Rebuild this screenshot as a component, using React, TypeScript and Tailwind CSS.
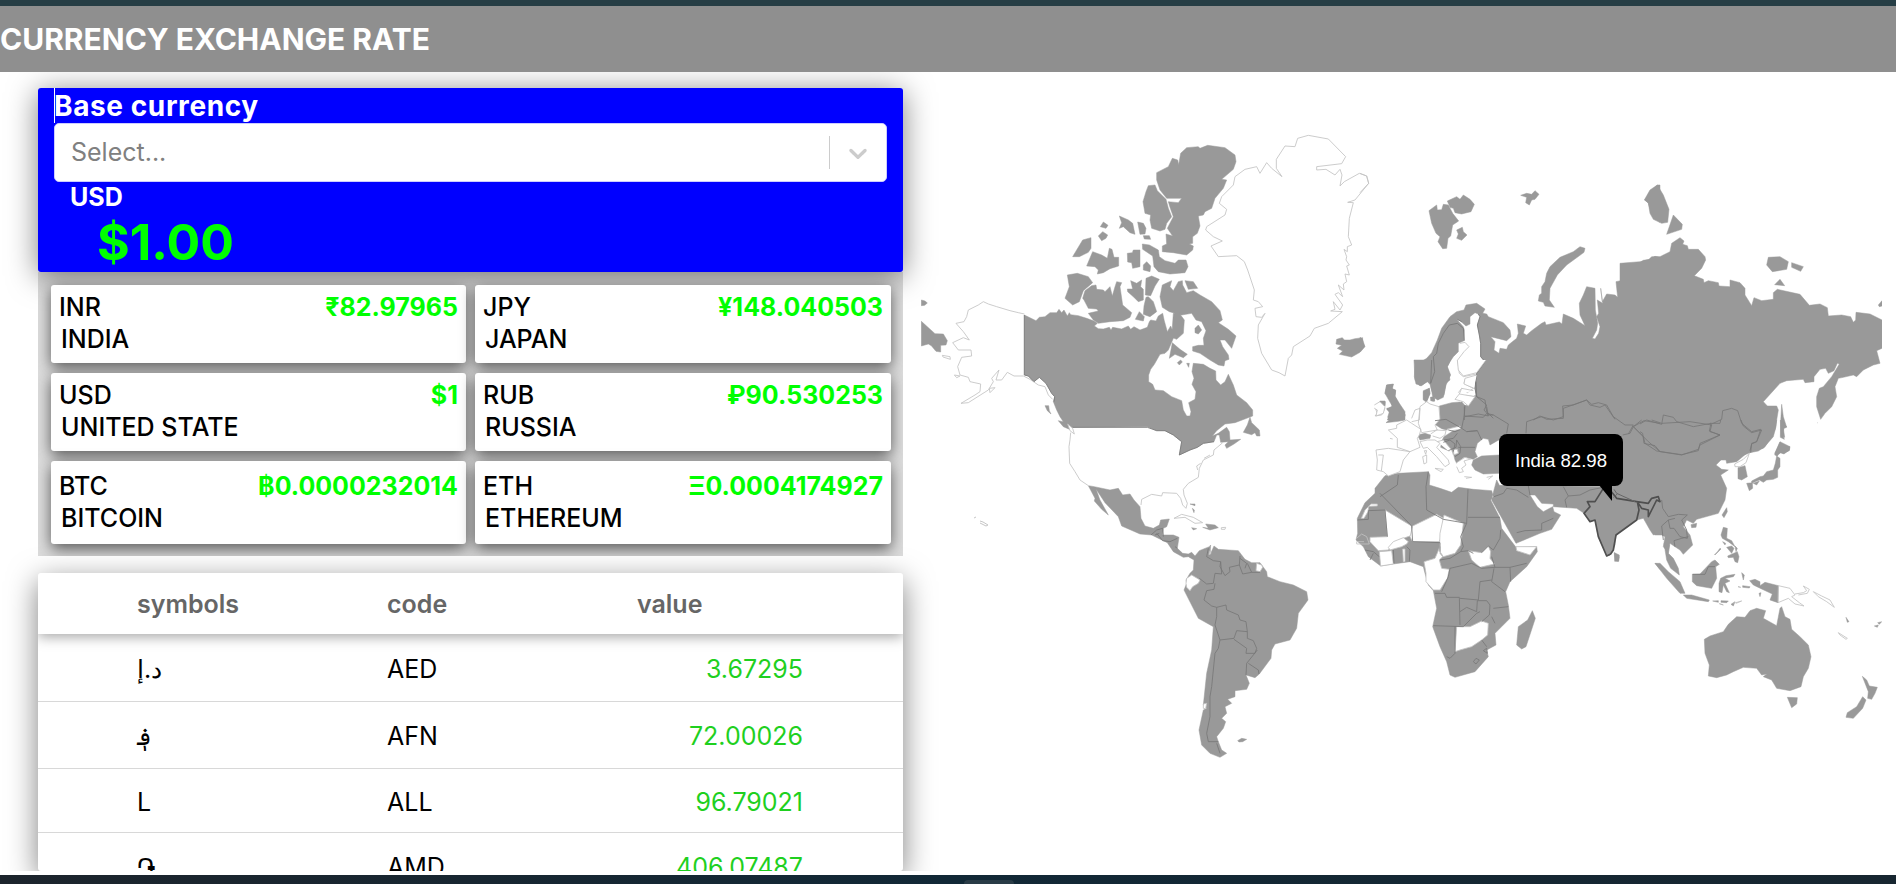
import React from "react";

const rates = [
  { code: "INR", name: "INDIA", value: "₹82.97965" },
  { code: "JPY", name: "JAPAN", value: "¥148.040503" },
  { code: "USD", name: "UNITED STATE", value: "$1" },
  { code: "RUB", name: "RUSSIA", value: "₽90.530253" },
  { code: "BTC", name: "BITCOIN", value: "฿0.0000232014" },
  { code: "ETH", name: "ETHEREUM", value: "Ξ0.0004174927" },
];

const rows = [
  { symbol: "د.إ", code: "AED", value: "3.67295", height: "h-[67px]" },
  { symbol: "؋", code: "AFN", value: "72.00026", height: "h-[67px]" },
  { symbol: "L", code: "ALL", value: "96.79021", height: "h-[64px]" },
  { symbol: "֏", code: "AMD", value: "406.07487", height: "h-[67px]" },
];

type Sheet = { at: string; land: string[]; open?: string[]; borders?: string[] };

const sheets: Sheet[] = [
  {
    at: "translate(910 120) scale(.33333)",
    land: [
      "M343 585 378 602 388 592 405 590 420 578 440 578 447 568 455 578 462 570 472 588 478 578 482 584 505 587 530 595 552 603 562 610 553 618 565 626 580 627 598 622 603 630 608 622 635 627 655 618 662 628 672 620 690 630 712 622 718 605 722 600 738 603 745 588 758 580 763 603 772 635 782 618 788 632 790 655 775 690 765 700 750 703 733 733 722 748 716 765 716 785 728 793 735 810 760 812 785 830 815 842 820 870 830 888 840 888 843 875 836 848 855 838 858 815 846 793 852 775 846 755 850 730 880 733 900 745 917 753 918 780 932 795 945 785 955 763 970 795 980 825 1010 848 1028 870 1028 888 1010 895 975 908 945 912 920 932 907 948 925 940 950 922 958 935 960 960 992 958 972 972 950 985 945 975 955 965 932 967 928 945 920 945 912 965 880 970 862 982 840 990 808 1005 815 965 790 945 765 932 740 932 712 920 488 922 483 930 460 920 445 902 460 905 450 890 440 870 430 845 434 830 425 820 408 790 388 772 372 785 355 768 343 765Z",
      "M1020 892 1025 908 1048 930 1050 948 1040 948 1035 938 1025 944 1000 937 1012 915Z",
      "M405 857 416 857 418 872 423 882 412 872Z",
      "M893 76 945 83 975 105 978 125 970 148 935 178 950 180 940 205 915 235 905 265 885 275 880 285 865 288 870 318 862 340 848 350 848 370 838 372 850 378 848 390 830 405 790 398 757 395 757 378 770 372 768 342 788 348 772 325 790 290 780 262 775 245 805 248 815 235 770 235 750 210 740 180 740 158 775 140 787 115 803 120 806 134 812 100 830 83 865 80 870 85Z",
      "M715 197 735 195 742 212 768 238 775 265 785 290 770 310 765 328 750 333 725 325 720 300 722 285 705 280 699 245 708 215Z",
      "M628 288 655 300 668 310 675 343 660 338 640 320 628 325 635 308Z",
      "M683 306 700 310 708 325 705 342 690 343Z",
      "M700 347 718 347 722 358 703 357Z",
      "M571 320 580 306 594 316 588 325Z",
      "M565 348 578 335 593 345 588 355 575 362Z",
      "M518 360 543 353 543 385 535 397 508 410 488 410Z",
      "M548 395 575 405 592 415 598 385 606 388 612 412 626 412 626 438 600 446 580 458 562 462 565 450 555 440 530 438Z",
      "M652 400 667 398 670 390 690 390 690 440 668 445 665 428 653 426Z",
      "M697 372 718 375 745 390 748 410 765 422 795 430 805 420 828 420 834 440 825 458 780 462 745 455 732 440 728 408 698 388Z",
      "M700 435 710 425 722 438 720 455 700 450Z",
      "M472 465 502 460 535 470 548 488 520 512 508 545 488 555 465 535 478 500Z",
      "M545 497 558 495 560 508 580 510 585 515 600 500 607 528 615 500 620 485 635 488 630 500 638 555 665 578 660 592 640 602 600 605 565 610 550 600 535 580 565 573 560 567 535 565 522 540 518 535 525 512Z",
      "M662 482 680 490 695 480 692 500 700 508 700 540 685 545 670 530 653 515 652 507 668 507Z",
      "M708 475 725 468 748 478 735 498 722 527 706 525Z",
      "M708 532 715 530 730 545 740 575 720 590 700 583 702 558Z",
      "M688 575 703 590 700 603 676 598Z",
      "M757 495 785 482 780 500 790 512 805 485 817 482 818 495 830 518 850 512 870 525 905 545 930 572 937 600 925 608 955 628 978 648 965 685 945 660 930 660 938 680 955 705 957 718 945 722 942 738 925 735 900 720 870 700 848 693 848 680 865 676 882 676 880 655 888 632 875 605 858 600 845 580 815 585 778 575 757 562 750 530Z",
      "M825 482 850 485 863 505 835 508Z",
      "M790 580 808 580 823 600 820 640 800 658 785 652Z",
      "M855 625 865 615 875 630 865 642 855 638Z",
      "M787 668 810 688 832 703 820 713 795 703 778 715Z",
      "M802 728 812 720 817 726 808 735ZM830 730 838 730 836 742Z",
      "M34 540 45 543 52 549 44 556 34 557ZM34 604 75 641 100 642 112 662 108 675 92 676 92 696 78 694 64 677 55 672 34 678Z",
      "M1280 658 1297 653 1303 660 1320 660 1335 656 1358 653 1357 666 1365 680 1350 697 1325 711 1288 703 1298 693 1282 685 1295 676 1278 672Z",
    ],
    open: [
      "M1116 170 1099 145 1099 118 1125 78 1155 80 1163 55 1195 46 1255 57 1307 110 1295 131 1220 140 1220 150 1248 148 1275 165 1290 148 1296 165 1290 198 1303 185 1348 160 1370 168 1376 190 1335 240 1313 247 1330 248 1318 295 1315 350 1325 375 1312 380 1312 395 1302 388 1310 410 1308 420 1318 435 1310 438 1318 465 1305 462 1310 485 1300 492 1302 510 1285 495 1298 530 1285 518 1275 523 1298 555 1290 570 1270 545 1275 568 1262 573 1297 575 1255 610 1213 625 1200 648 1150 680 1145 705 1135 715 1125 768 1107 758 1085 750 1055 700 1043 655 1045 615 1065 580 1055 592 1038 590 1035 565 1058 560 1045 545 1030 540 1033 510 1013 450 1003 425 980 407 925 410 903 378 937 363 910 350 887 330 890 320 945 285 950 268 928 250 935 230 970 195 975 170 1005 148 1040 140 1050 160 1070 128 1085 145Z",
      "M343 582 325 578 300 572 260 560 235 552 220 545 205 555 175 570 170 590 162 605 138 610 160 635 178 660 160 653 128 668 145 690 183 690 185 708 155 712 143 740 150 765 175 772 180 785 212 792 210 815 195 825 153 850 175 848 235 810 250 785 245 775 267 750 258 780 275 780 292 757 312 768 340 768 360 778 385 795 405 800 415 825 428 838",
      "M97 706 120 710 121 718 99 711ZM133 765 150 768 140 773ZM238 805 255 803 240 818ZM473 912 488 925 493 942 480 932Z",
    ],
  },
  {
    at: "translate(1360 170) scale(.33333)",
    land: [
      "M0 502 8 508 14 528 0 545Z",
      "M375 417 350 400 318 405 312 420 290 425 270 440 245 475 232 510 215 548 200 565 165 587 163 620 168 642 185 647 205 632 210 640 213 655 222 680 235 688 252 675 258 640 270 630 265 605 262 590 270 575 280 560 295 545 295 520 312 512 313 480 310 470 290 448 300 452 318 468 330 462 330 440 345 428 355 432 360 440 352 465 358 495 362 520 362 560 375 575 350 610 345 655 350 680 350 750 900 750 900 262 885 259 868 268 850 271 815 295 815 325 768 335 773 382 765 375 740 372 727 395 722 355 728 400 712 390 716 430 710 440 720 470 716 490 705 507 697 505 710 480 713 460 706 420 705 355 680 350 670 375 658 400 660 435 675 467 640 445 610 432 606 462 598 456 558 465 555 455 545 460 515 482 500 495 490 490 497 468 472 462 475 490 470 505 445 525 440 538 420 535 417 550 402 540 405 515 392 500 440 512 453 500 450 480 430 458 385 440 380 432 368 430Z",
      "M207 122 230 105 232 120 245 119 250 103 265 105 278 130 296 153 278 165 272 198 264 205 260 235 248 236 234 215 240 200 228 190 215 160Z",
      "M262 93 290 80 300 88 310 75 330 88 343 103 333 125 305 132 285 128 280 115 270 112Z",
      "M290 180 307 172 310 185 321 195 305 211 290 205 295 192Z",
      "M482 76 500 70 515 73 525 62 537 73 525 88 515 90 508 105 497 98 500 82Z",
      "M570 290 600 262 640 245 660 230 675 235 672 247 620 285 592 315 570 355 568 390 583 412 555 408 550 397 535 393 538 375 545 370 545 350 555 335 560 310Z",
      "M900 45 892 45 870 65 855 90 865 100 875 135 900 157Z",
      "M190 665 208 655 210 670 205 680 200 697 190 690ZM212 682 222 680 224 693 212 692Z",
      "M80 645 100 643 95 655 107 660 105 680 115 700 130 725 136 735 130 750 82 750 90 730 80 715 97 712 90 685 75 670Z",
      "M238 708 275 698 300 696 305 706 325 708 350 683 375 690 385 718 380 725 405 750 240 750Z",
      "M60 693 75 693 75 708 62 705Z",
    ],
    open: [
      "M350 612 310 620 298 610 293 570 312 545 327 530 315 517 300 520M0 10 20 18 26 40 0 68M345 625 315 628 312 640 330 650 345 655M295 668 305 655 322 668 340 655M293 680 318 676 345 680M62 705 45 712 52 730 45 738 65 735 75 715",
    ],
    borders: [
      "M313 512 310 475 292 460 268 465 250 490 235 520 230 550 220 560 224 605 212 640M292 448 305 455M355 432 360 440 352 465 358 495 362 520 362 560 375 575 350 610 345 655 350 680 375 690 380 725 400 745M520 750 540 738 560 748 610 745 608 708 640 705 680 690 690 705 720 712 735 705 765 748M313 738 370 742 380 730 400 735M313 710 313 750",
    ],
  },
  {
    at: "translate(1640 160) scale(.33333)",
    land: [
      "M-60 310 0 305 25 300 35 290 60 290 90 275 95 250 120 233 132 243 128 253 142 257 145 268 175 268 195 290 197 300 185 325 163 347 190 358 192 368 205 362 235 368 237 378 270 380 270 360 300 368 315 385 315 405 335 437 342 413 365 422 400 418 400 398 412 388 480 403 508 436 540 432 562 443 565 468 605 465 632 470 640 487 647 480 648 457 690 462 726 480 726 565 710 572 720 610 700 615 670 630 650 650 640 645 610 652 595 655 585 680 590 710 575 740 555 760 542 778 530 740 530 710 538 685 550 680 575 650 598 612 592 610 582 632 565 640 557 625 540 628 522 650 522 665 495 668 490 658 440 662 420 670 370 725 382 738 410 738 415 750 405 810 375 860 355 873 330 878 300 890 250 900 -60 900Z",
      "M52 75 70 105 87 148 83 187 65 190 40 178 30 160 25 128 13 120 30 90Z",
      "M100 165 127 193 125 208 80 223Z",
      "M385 292 420 290 445 305 440 328 397 335 380 315ZM455 308 490 320 482 334 455 322ZM404 374 420 358 434 377Z",
      "M726 422 715 435 718 440 726 438Z",
      "M425 733 430 770 440 802 432 805 428 822 433 838 421 832 422 785Z",
      "M420 846 432 858 449 860 448 870 432 882 422 878 410 888 404 880Z",
    ],
    borders: [
      "M0 792 20 780 65 793 70 765 100 772 110 785 160 800 213 790 208 813 240 825 220 835 180 855 175 868 125 885 60 875 45 857 12 850 8 820 0 815M213 793 245 778 248 752 275 745 293 752 305 790 335 815 362 808 350 845 335 850 332 878",
    ],
  },
  {
    at: "translate(1340 360) scale(.33333)",
    land: [
      "M438 0 410 45 405 65 408 105 395 112 378 140 365 125 345 135 300 140 300 178 285 182 283 192 305 206 320 210 360 198 362 208 340 212 312 230 305 243 302 262 325 272 340 280 345 300 350 310 372 292 400 298 412 290 405 275 412 250 430 235 445 238 450 255 462 248 476 240 490 260 850 300 850 380 478 376 470 360 458 405 455 420 528 550 600 520 635 508 662 465 642 455 638 440 610 455 592 440 570 405 585 405 605 430 640 432 640 440 710 445 732 460 750 485 765 480 775 530 800 588 812 582 820 570 828 525 890 480 910 475 930 510 940 525 960 520 960 0Z",
      "M400 300 425 288 478 285 478 340 430 342 405 330 395 315Z",
      "M222 0 225 60 240 78 262 65 272 75 278 110 293 120 310 112 318 75 332 45 322 20 332 0Z",
      "M140 75 160 72 157 88 167 92 165 108 178 130 195 155 195 180 175 184 138 188 150 178 143 172 148 155 140 148 157 138 145 118 135 100ZM120 125 136 125 135 137 124 135ZM250 92 268 85 270 102 262 120 250 118ZM272 112 284 112 283 124 275 123Z",
      "M232 225 255 220 272 225 270 235 240 240Z",
      "M135 347 175 340 265 335 270 345 268 375 300 385 335 397 355 382 400 388 455 392 460 410 452 420 480 475 485 505 528 562 590 560 592 575 560 620 510 665 497 695 505 735 510 775 465 820 468 855 440 870 445 890 405 935 345 952 330 945 320 905 300 860 278 800 290 745 280 692 265 675 255 640 250 620 210 605 160 612 122 618 85 590 70 560 48 540 53 520 52 475 75 428 105 400 105 385Z",
      "M577 752 586 775 558 860 545 867 530 855 535 800 563 780Z",
      "M823 578 838 590 836 604 824 604Z",
      "M945 610 960 615 960 628Z",
    ],
    open: [
      "M93 432 112 432 112 438 86 439 84 455 72 475 64 475 75 450 85 440Z",
      "M135 450 215 498 218 525 190 535 170 545 150 562 145 570 115 572 90 545 90 532 142 530Z",
      "M218 498 290 463 310 475 308 520 298 545 218 545 210 530Z",
      "M312 465 370 490 362 555 345 580 310 590 298 572 300 520Z",
      "M190 533 205 545 200 552 185 560 150 570 145 562 160 545Z",
      "M118 575 155 572 160 612 122 618ZM188 567 195 567 195 605 190 605Z",
      "M300 560 300 580 308 590 298 600 305 625 328 628 322 655 300 690 280 690 258 665 258 640 252 605 285 595Z",
      "M385 572 425 578 445 558 452 575 450 595 463 612 420 622 395 600Z",
      "M350 800 390 800 425 783 445 790 443 825 425 840 395 860 360 870 345 875Z",
      "M528 560 590 560 570 585 530 572Z",
      "M50 535 65 522 80 530 88 552 50 552 50 545 72 545",
      "M103 135 120 125 135 140 130 160 108 168 112 150 103 145M108 270 145 265 210 275 190 300 180 335 145 348 130 335 110 330 112 300ZM115 285 130 285 124 333M145 210 170 205 170 195 200 180 215 190 243 208 238 225 232 235 240 262 210 275 172 262 172 235ZM215 175 225 150 240 145 238 180 215 185M240 140 260 125 270 132 297 140 300 178 285 195 292 210 245 218 235 190ZM240 245 262 240 285 240 300 250 290 262 325 300 328 312 315 320 290 290 262 262 250 265ZM272 222 290 210 318 212 315 225 300 235 278 228M320 208 360 198 362 208 335 212M285 325 310 328 303 335ZM248 290 260 285 260 308 252 312ZM253 272 260 272 257 283ZM350 308 375 292 392 297 372 303 378 315 365 325 370 335 358 338 350 320M373 350 395 352 378 355M440 352 458 348 445 358M410 45 375 55 372 72 402 85M358 102 365 85 400 92M358 102 405 110 385 138 370 125 345 118ZM438 0 410 38 370 48 355 30 352 0M150 235 158 237M292 245 310 240 335 270 340 285M340 268 352 268 355 280 342 284Z",
    ],
    borders: [
      "M275 0 272 70M408 65 410 110 440 135 432 150 445 165M440 140 445 168 415 162 375 170M375 135 373 165 365 205 380 215 412 212M440 165 460 165 505 192 500 220M285 182 318 178 365 205M325 210 345 215 362 208M312 240 340 235 352 220M325 272 348 262 350 240M355 262 405 262M380 215 412 212 425 240M350 240 362 260 360 280 345 290M310 247 330 240 345 252 340 275M558 220 560 185 605 170 640 180 670 170 670 145 740 120 755 133 775 128 800 135 820 170 855 195 880 195 865 222M880 200 912 182 960 190M880 200 925 245 960 275",
      "M175 345 172 375 120 410M120 400 215 498M265 335 258 380 260 450 310 478 380 490 384 388M384 472 480 472M380 490 362 530 370 560 362 575 330 595 300 600M362 575 385 572 400 580M425 578 445 558 460 570 480 535 482 510M455 590 465 622 425 625M465 622 510 622 560 610M510 622 512 665M462 625 455 665 495 695M420 665 455 660M420 665 415 720 360 715M305 695 325 650 330 625 395 610 425 625M285 700 315 700 320 712 358 712 360 795M280 797 370 800 410 760 420 755M360 755 380 742 410 755 412 722 440 722 450 735 448 765 425 785M460 745 505 740M455 770 465 790M345 800 345 880 330 895 320 890M425 840 440 860M400 905 408 895 418 900 408 912ZM430 872 440 865 442 880ZM52 480 85 478 85 452 135 450 142 530M215 498 218 545 300 548 300 575M160 570 162 610M200 560 210 570 208 605M75 570 100 575 118 590M100 580 90 600M462 410 490 400 500 385 530 390 565 412M530 518 555 512 605 510 605 490 640 475M565 378 570 405M670 380 685 408 675 420 680 442M685 408 720 405 750 390 800 380",
    ],
  },
  {
    at: "translate(1600 420) scale(.33333)",
    land: [
      "M0 0 530 0 528 20 520 50 490 85 450 92 440 100 410 125 380 130 378 120 365 118 348 135 365 148 385 150 362 165 380 205 375 240 355 280 290 298 280 310 260 300 250 320 270 345 278 375 250 403 240 390 225 380 210 370 205 400 190 380 195 350 185 345 165 345 155 320 130 290 105 295 45 350 45 375 27 408 0 355Z",
      "M192 370 208 375 205 400 220 415 235 445 238 465 212 445 200 420Z",
      "M414 143 435 137 442 170 425 180 414 176Z",
      "M541 0 560 20 550 25 554 52 543 48ZM540 65 570 80 568 92 550 100 535 97 533 107 524 105Z",
      "M530 108 540 115 540 140 533 150 533 172 520 178 500 180 490 187 478 180 455 190 455 183 480 170 490 168 500 155 520 150 526 130ZM440 190 457 188 458 205 448 212ZM460 190 478 183 470 195Z",
      "M380 263 382 275 372 293 366 285ZM273 314 290 310 288 322 275 323Z",
      "M370 322 382 325 380 355 395 362 405 380 385 365 367 355 363 345ZM368 365 377 370 375 375ZM380 382 395 378 402 385 395 400ZM405 378 412 385 408 395ZM383 408 412 395 417 410 413 428 405 425 400 412 385 413ZM360 385 363 387 345 405Z",
      "M165 430 180 430 205 455 240 485 255 520 240 520 200 475Z",
      "M250 525 275 525 328 540 325 545 260 535ZM338 543 355 542 355 547ZM363 542 385 543 380 548 363 547ZM393 553 405 545 400 558ZM358 551 370 555Z",
      "M277 463 300 462 335 425 345 420 358 433 347 440 350 475 335 505 290 497 277 485Z",
      "M362 475 378 467 405 463 400 470 375 475 390 483 375 490 388 518 380 515 370 495 366 518 357 515 357 490Z",
      "M425 458 433 465 430 480ZM414 500 422 502ZM428 497 450 500 448 504 428 502ZM477 520 483 518 480 530Z",
      "M449 482 465 478 480 485 480 497 495 487 535 497 534 548 510 540 517 522 485 507 460 495Z",
      "M313 658 330 648 370 635 385 613 410 590 435 592 450 572 470 565 497 572 490 595 530 617 540 565 545 560 555 590 570 598 575 628 600 650 625 675 633 710 625 745 610 770 603 800 570 812 530 805 515 780 490 770 500 762 485 765 470 745 430 742 400 755 380 765 350 773 325 768 328 735 315 700Z",
      "M562 832 592 833 590 852 575 863Z",
      "M787 769 800 780 808 798 832 802 825 820 815 838 803 835 805 815ZM788 830 798 840 788 865 760 895 738 892 742 878 770 860Z",
      "M738 592 747 605 742 607ZM823 618 835 615 832 622ZM833 608 845 605 838 613Z",
      "M43 398 58 405 55 424 46 422Z",
    ],
    open: [
      "M535 497 570 505 585 525 575 530 598 548 612 558 585 552 565 535 534 548ZM585 522 610 518 620 512 610 498 628 508 622 520 595 525M640 515 665 528 690 540 703 562 680 545 655 530ZM715 638 742 655 738 658 720 645ZM400 550 425 543 408 550M404 132 430 118 448 100 438 128 420 140 405 140ZM342 405 355 392M652 8 654 9",
    ],
    borders: [
      "M68 45 90 40 100 20 125 0M100 20 130 50 135 70 170 93 245 104 295 92 300 70 360 45 330 35 335 15 270 5 185 10 155 0M330 10 360 10 362 0M423 0 430 18 455 38 485 30 470 65 455 72 450 92M185 240 188 265 205 290 235 283 262 285 245 300 260 330 262 355 240 350 222 325 210 325 205 300 185 318 190 360M205 300 225 295M225 380 222 362 245 355 265 350M278 463 315 463 325 440 345 440",
    ],
  },
  {
    at: "translate(1060 420) scale(.33333)",
    land: [
      "M85 197 103 200 150 210 175 205 188 225 210 222 222 240 240 260 243 295 255 318 280 325 298 315 302 300 328 297 320 320 310 325 308 345 340 345 357 352 352 385 368 400 385 402 395 397 405 408 418 392 448 380 452 375 450 405 462 378 475 388 535 392 555 418 575 428 600 428 620 455 622 470 660 485 700 495 740 515 744 540 715 580 710 625 690 660 645 672 635 690 633 715 598 762 585 773 558 765 568 790 560 808 525 812 525 830 503 838 515 850 495 860 500 880 485 895 497 905 490 925 470 950 475 965 485 990 500 1000 480 1012 450 1000 425 975 417 930 430 870 440 865 430 855 440 760 455 690 460 620 415 595 372 510 380 490 378 480 390 460 400 450 402 420 385 410 370 412 340 395 322 368 275 345 240 342 185 318 175 290 135 248 108 207 120 240 145 285 125 268 103 243 105 235Z",
      "M390 252 405 252 405 257ZM397 265 403 270 402 278ZM395 323 410 326 400 330ZM428 322 445 325 437 312 465 315 475 323 450 330ZM533 962 545 955 560 958 548 965 537 966Z",
    ],
    open: [
      "M32 38 30 60 27 80 29 130 45 155 60 180 85 197M243 255 245 238 275 223 305 228 308 218 350 220 362 235 368 255 378 265 382 250 372 225 370 208 385 190 415 172 418 145 430 120 460 105 462 90 480 75 488 68M413 150 410 138 422 130M432 115 450 105M342 295 365 283 400 292 428 308 405 310 375 292ZM484 323 497 322 495 328 484 328Z",
      "M378 490 380 475 395 465 420 480 415 490 398 500 390 512 380 502Z",
      "M590 430 605 435 608 442 600 455 588 452ZM450 392 453 400 447 404ZM430 852 440 850 437 866 430 865Z",
    ],
    borders: [
      "M445 385 440 410 460 422 482 425 485 462 465 460 460 490 440 492 418 475M482 425 480 440 495 467 510 455 508 442 538 435 540 408M538 435 548 462 575 457 562 430M575 457 600 457M465 490 462 508 440 512 432 540 455 558 470 562 470 590 465 615 480 660 522 655 530 632 562 635 558 605 540 600 535 585 500 570 498 555 470 562M480 660 475 685 465 700 455 800 450 830 450 890 440 940 445 965 475 965M522 658 560 685 558 700 585 700 590 685 580 662 562 655 562 635M592 690 560 730 558 765M565 730 595 750 597 762M273 345 290 330 308 325 310 350M290 340 308 362 330 365 352 355M345 380 352 385M285 345 298 340M540 415 560 430 555 445M470 970 480 1000",
    ],
  },
];

const india =
  "M790 385 765 425 742 425 750 440 732 460 750 485 765 480 775 530 800 588 812 582 820 570 828 525 890 480 897 450 892 425 905 445 925 450 925 470 935 450 950 420 960 425 955 410 935 415 925 430 890 425 830 415 810 390";

function WorldMap() {
  return (
    <svg viewBox="921 72 961 799" className="block h-[799px] w-[961px]" aria-label="World map">
      {sheets.map((sheet) => (
        <g key={sheet.at} transform={sheet.at} strokeLinejoin="round">
          <path d={sheet.land.join("")} fill="#999" stroke="#999" strokeWidth="1.5" />
        </g>
      ))}
      {sheets.map((sheet) => (
        <g key={sheet.at} transform={sheet.at} strokeLinejoin="round">
          {sheet.open?.map((d) => (
            <path key={d} d={d} fill={d.endsWith("Z") ? "#fff" : "none"} stroke="#c2c2c2" strokeWidth="2.5" />
          ))}
          {sheet.borders?.map((d) => (
            <path key={d} d={d} fill="none" stroke="#777" strokeWidth="2.5" />
          ))}
        </g>
      ))}
      <g transform="translate(910 120) scale(.33333)" fill="none" stroke="#777" strokeWidth="2.5">
        <path d="M343 585V765L355 768 372 785 388 772 408 790 425 820 434 830 432 845M488 922H712L740 932 765 932 790 945 815 965 808 1005 840 990 862 982 880 970 912 965" />
      </g>
      <g transform="translate(1340 360) scale(.33333)">
        <path d={india} fill="none" stroke="#4f4f4f" strokeWidth="5" strokeLinejoin="round" />
        <path d="M822 388 830 400 885 425M832 402 820 412" fill="none" stroke="#666" strokeWidth="3" />
      </g>
      <path d="M974 518 976 517M980 521 983 522 988 525 986 526 980 523" fill="none" stroke="#c6c6c6" />
    </svg>
  );
}

export default function App() {
  return (
    <div className="flex h-[884px] w-[1896px] flex-col overflow-hidden bg-white font-['Inter','Noto_Sans',sans-serif] text-black">
      <div className="h-[6px] shrink-0 bg-[#263e45]" />
      <header className="flex h-[66px] shrink-0 items-center bg-[#8f8f8f]">
        <h1 className="text-[30px] leading-none font-bold text-white">CURRENCY EXCHANGE RATE</h1>
      </header>

      <main className="flex h-[799px] shrink-0 overflow-hidden">
        <section className="flex w-[921px] shrink-0 flex-col pt-4 pl-[38px]">
          <div className="flex h-[184px] w-[865px] shrink-0 flex-col rounded-[3px] bg-[#0000ff] px-4 shadow-[0_4px_30px_rgba(0,0,0,0.5)]">
            <h2 className="h-[35px] border-l border-white text-[28px] leading-[36px] font-bold tracking-[0.6px] text-white">
              <span className="-ml-px">Base currency</span>
            </h2>
            <div className="flex h-[59px] shrink-0 items-center rounded-[5px] border border-[#ccccff] bg-white pl-4 text-[25px] text-[#808080]">
              <span className="flex-1">Select...</span>
              <span className="h-[33px] w-px bg-[#ccc]" />
              <span className="flex w-[56px] justify-center">
                <svg viewBox="0 0 20 20" className="h-[30px] w-[30px]" fill="#ccc">
                  <path d="M4.516 7.548c0.436-0.446 1.043-0.481 1.576 0l3.908 3.747 3.908-3.747c0.533-0.481 1.141-0.446 1.574 0 0.436 0.445 0.408 1.197 0 1.615-0.406 0.418-4.695 4.502-4.695 4.502-0.217 0.223-0.502 0.335-0.787 0.335s-0.57-0.112-0.789-0.335c0 0-4.287-4.084-4.695-4.502s-0.436-1.17 0-1.615z" />
                </svg>
              </span>
            </div>
            <div className="pl-4 text-[25px] leading-[30px] font-bold text-white">USD</div>
            <div className="pl-[43px] text-[50px] leading-[60px] font-bold text-[#00ff00]">$1.00</div>
          </div>

          <div className="grid h-[284px] w-[865px] shrink-0 grid-cols-[415px_416px] grid-rows-[78px_78px_83px] gap-x-[9px] gap-y-[10px] overflow-hidden bg-[#00000022] px-[13px] pt-[13px]">
            {rates.map((rate) => (
              <article
                key={rate.code}
                className="flex justify-between rounded-[3px] bg-white px-2 pt-[6px] text-[25px] leading-[32px] font-medium shadow-[0_5px_15px_rgba(0,0,0,0.6)] nth-[n+5]:pt-[9px]"
              >
                <div>
                  <div>{rate.code}</div>
                  <div className="pl-[2px]">{rate.name}</div>
                </div>
                <div className="font-bold text-[#00ff00]">{rate.value}</div>
              </article>
            ))}
          </div>

          <div className="mt-[17px] flex h-[298px] w-[865px] shrink-0 flex-col overflow-hidden rounded-[3px] bg-white shadow-[0_8px_30px_rgba(0,0,0,0.5)]">
            <div className="z-10 grid h-[61px] shrink-0 grid-cols-[250px_250px_1fr] items-center bg-white pt-[2px] pl-[99px] text-[25px] font-semibold text-[#666] shadow-[0_3px_12px_rgba(0,0,0,0.35)]">
              <span>symbols</span>
              <span>code</span>
              <span>value</span>
            </div>
            <div className="flex min-h-0 flex-1 flex-col overflow-hidden pt-px">
              {rows.map((row) => (
                <div
                  key={row.code}
                  className={`grid shrink-0 grid-cols-[250px_250px_166px] items-center border-b border-[#d8d8d8] pt-1 pl-[99px] text-[25px] ${row.height}`}
                >
                  <span>{row.symbol}</span>
                  <span>{row.code}</span>
                  <span className="text-right text-[#1fd01f]">{row.value}</span>
                </div>
              ))}
            </div>
          </div>
        </section>

        <section className="relative h-[799px] w-[961px] shrink-0">
          <WorldMap />
          <div className="absolute top-[362px] left-[578px] flex h-[52px] w-[124px] items-center justify-center rounded-[8px] bg-black pt-px font-['Liberation_Sans',Arial,sans-serif] text-[18.6px] text-white">
            India 82.98
            <svg viewBox="0 0 14 17" className="absolute top-[51px] left-[100px] h-[17px] w-[14px]">
              <path d="M0 0H13V16Z" fill="#000" />
            </svg>
          </div>
        </section>
      </main>

      <footer className="mt-1 flex h-[9px] shrink-0 items-end bg-linear-to-r from-[#1c242c] via-[#112836] to-[#172630] pl-[964px]">
        <span className="h-[4px] w-[50px] rounded-t bg-[#293b46]" />
      </footer>
    </div>
  );
}
